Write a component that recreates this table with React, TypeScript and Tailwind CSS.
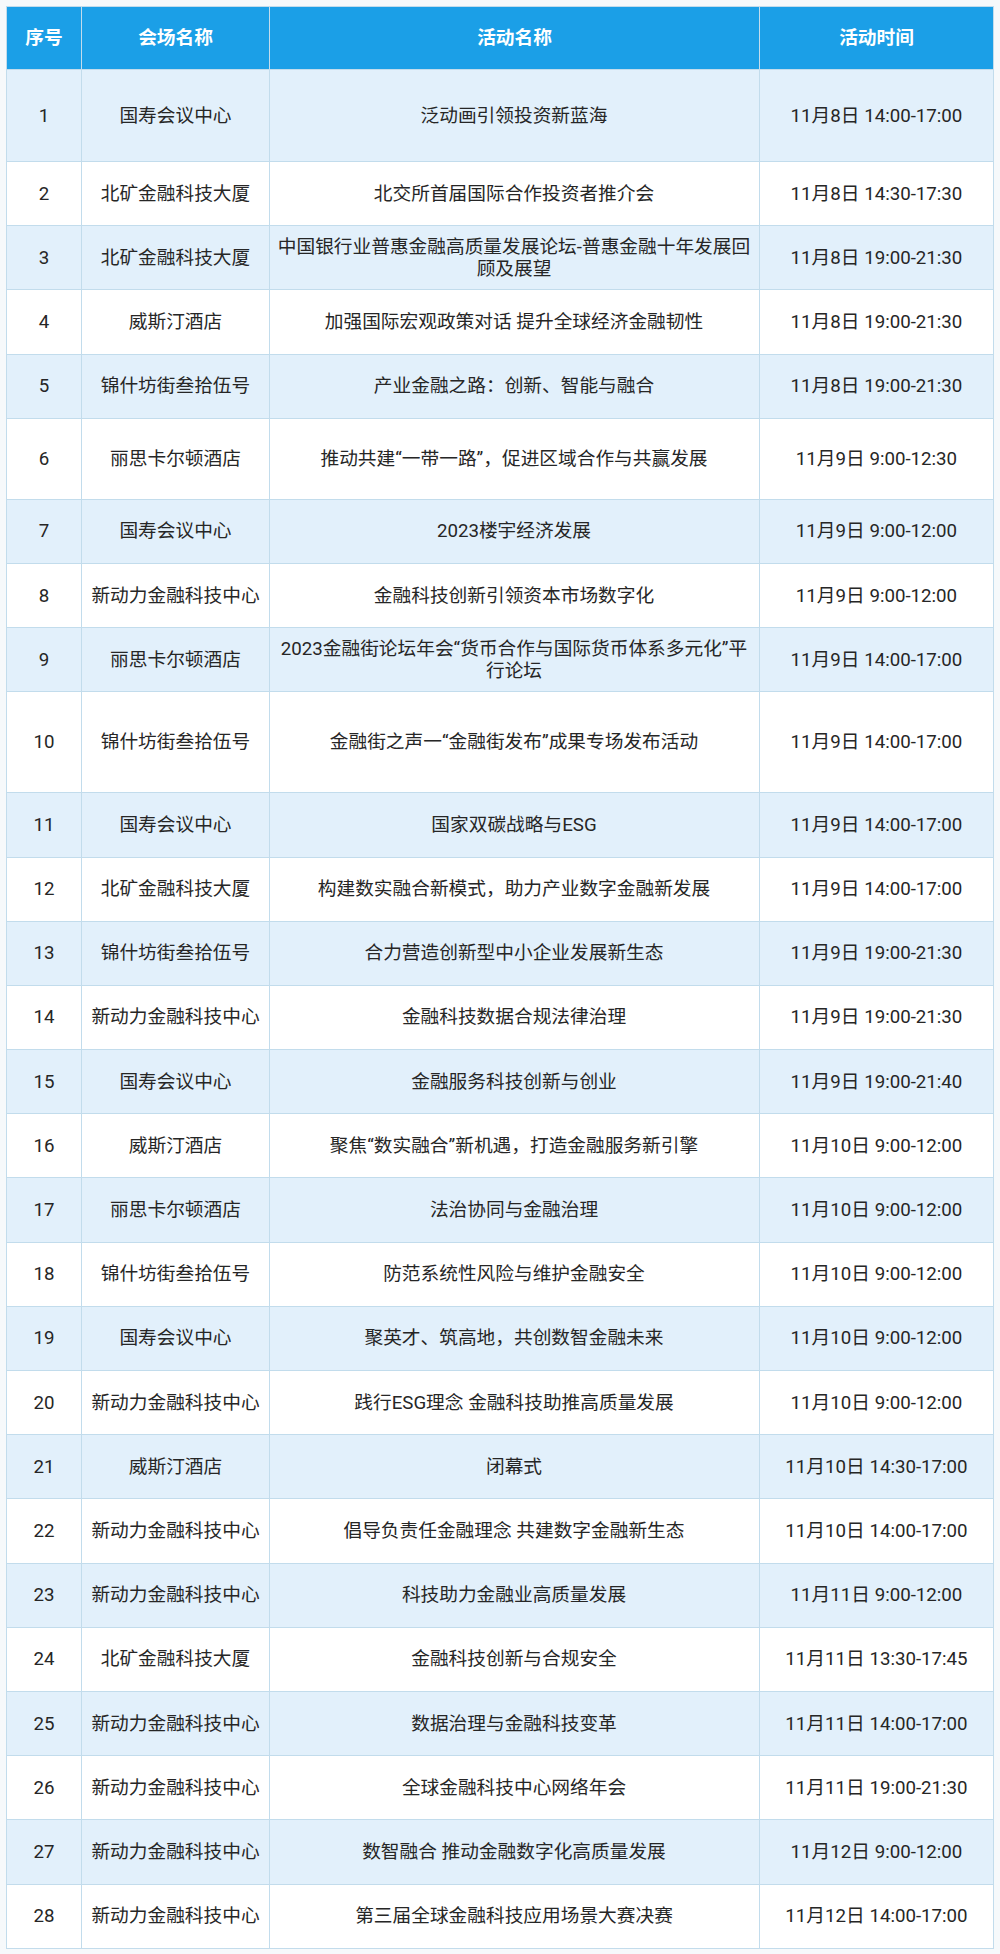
import React from "react";

type Row = [string, string, string[], string];

const rows: Row[] = [
  ["1", "国寿会议中心", ["泛动画引领投资新蓝海"], "11月8日 14:00-17:00"],
  ["2", "北矿金融科技大厦", ["北交所首届国际合作投资者推介会"], "11月8日 14:30-17:30"],
  ["3", "北矿金融科技大厦", ["中国银行业普惠金融高质量发展论坛-普惠金融十年发展回", "顾及展望"], "11月8日 19:00-21:30"],
  ["4", "威斯汀酒店", ["加强国际宏观政策对话 提升全球经济金融韧性"], "11月8日 19:00-21:30"],
  ["5", "锦什坊街叁拾伍号", ["产业金融之路：创新、智能与融合"], "11月8日 19:00-21:30"],
  ["6", "丽思卡尔顿酒店", ["推动共建“一带一路”，促进区域合作与共赢发展"], "11月9日 9:00-12:30"],
  ["7", "国寿会议中心", ["2023楼宇经济发展"], "11月9日 9:00-12:00"],
  ["8", "新动力金融科技中心", ["金融科技创新引领资本市场数字化"], "11月9日 9:00-12:00"],
  ["9", "丽思卡尔顿酒店", ["2023金融街论坛年会“货币合作与国际货币体系多元化”平", "行论坛"], "11月9日 14:00-17:00"],
  ["10", "锦什坊街叁拾伍号", ["金融街之声一“金融街发布”成果专场发布活动"], "11月9日 14:00-17:00"],
  ["11", "国寿会议中心", ["国家双碳战略与ESG"], "11月9日 14:00-17:00"],
  ["12", "北矿金融科技大厦", ["构建数实融合新模式，助力产业数字金融新发展"], "11月9日 14:00-17:00"],
  ["13", "锦什坊街叁拾伍号", ["合力营造创新型中小企业发展新生态"], "11月9日 19:00-21:30"],
  ["14", "新动力金融科技中心", ["金融科技数据合规法律治理"], "11月9日 19:00-21:30"],
  ["15", "国寿会议中心", ["金融服务科技创新与创业"], "11月9日 19:00-21:40"],
  ["16", "威斯汀酒店", ["聚焦“数实融合”新机遇，打造金融服务新引擎"], "11月10日 9:00-12:00"],
  ["17", "丽思卡尔顿酒店", ["法治协同与金融治理"], "11月10日 9:00-12:00"],
  ["18", "锦什坊街叁拾伍号", ["防范系统性风险与维护金融安全"], "11月10日 9:00-12:00"],
  ["19", "国寿会议中心", ["聚英才、筑高地，共创数智金融未来"], "11月10日 9:00-12:00"],
  ["20", "新动力金融科技中心", ["践行ESG理念 金融科技助推高质量发展"], "11月10日 9:00-12:00"],
  ["21", "威斯汀酒店", ["闭幕式"], "11月10日 14:30-17:00"],
  ["22", "新动力金融科技中心", ["倡导负责任金融理念 共建数字金融新生态"], "11月10日 14:00-17:00"],
  ["23", "新动力金融科技中心", ["科技助力金融业高质量发展"], "11月11日 9:00-12:00"],
  ["24", "北矿金融科技大厦", ["金融科技创新与合规安全"], "11月11日 13:30-17:45"],
  ["25", "新动力金融科技中心", ["数据治理与金融科技变革"], "11月11日 14:00-17:00"],
  ["26", "新动力金融科技中心", ["全球金融科技中心网络年会"], "11月11日 19:00-21:30"],
  ["27", "新动力金融科技中心", ["数智融合 推动金融数字化高质量发展"], "11月12日 9:00-12:00"],
  ["28", "新动力金融科技中心", ["第三届全球金融科技应用场景大赛决赛"], "11月12日 14:00-17:00"],
];

function rowHeight(i: number): string {
  if (i === 0) return "h-[92px]";
  if (i === 5) return "h-[81px]";
  if (i === 9) return "h-[101px]";
  return "h-[64.2px]";
}

export default function App() {
  return (
    <div className="w-[1000px] h-[1954px] bg-[#f6f9fb] p-[6px] pr-[7px]">
      <table className="w-[987px] border-collapse table-fixed text-[18.7px] leading-[22px] text-[#262626] [font-family:Roboto,'Noto_Sans_CJK_SC',sans-serif]">
        <colgroup>
          <col className="w-[75px]" />
          <col className="w-[188px]" />
          <col className="w-[490px]" />
          <col className="w-[234px]" />
        </colgroup>
        <thead>
          <tr className="h-[63px] bg-[#1b9fe7] text-white">
            <th className="border border-[#c2dcec] font-bold">序号</th>
            <th className="border border-[#c2dcec] font-bold">会场名称</th>
            <th className="border border-[#c2dcec] font-bold">活动名称</th>
            <th className="border border-[#c2dcec] font-bold">活动时间</th>
          </tr>
        </thead>
        <tbody>
          {rows.map((r, i) => (
            <tr
              key={r[0]}
              className={`${rowHeight(i)} ${i % 2 === 0 ? "bg-[#e2f0fb]" : "bg-white"}`}
            >
              <td className="border border-[#c2dcec] text-center">{r[0]}</td>
              <td className="border border-[#c2dcec] text-center whitespace-nowrap">{r[1]}</td>
              <td className="border border-[#c2dcec] p-0">
                <div className="w-[488px] flex flex-col items-center">
                  {r[2].map((line) => (
                    <span key={line} className="block whitespace-nowrap text-center">
                      {line}
                    </span>
                  ))}
                </div>
              </td>
              <td className="border border-[#c2dcec] text-center whitespace-nowrap">{r[3]}</td>
            </tr>
          ))}
        </tbody>
      </table>
    </div>
  );
}
